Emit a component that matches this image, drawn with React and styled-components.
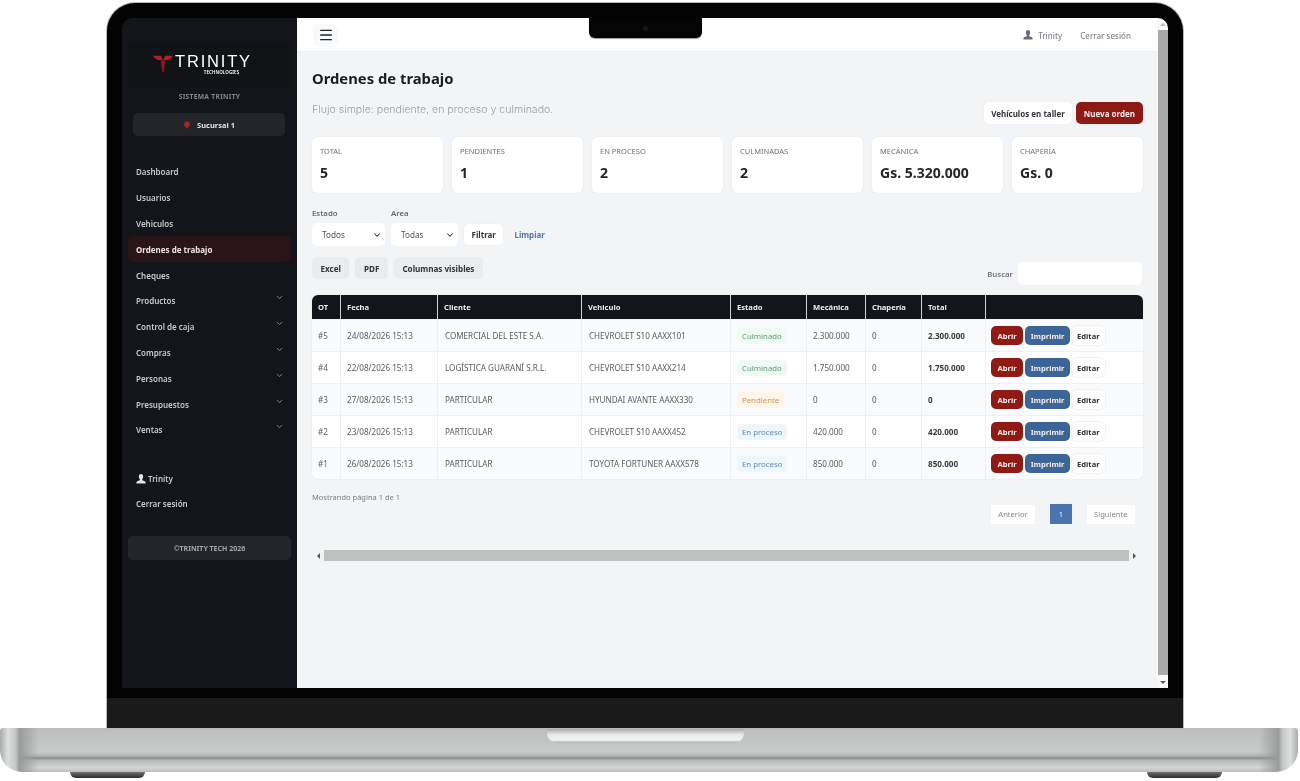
import React from "react";
import styled, { createGlobalStyle } from "styled-components";
import { Menu, ChevronDown, MapPin } from "lucide-react";

const GlobalStyle = createGlobalStyle`
  html, body {
    margin: 0;
    padding: 0;
    background: #fff;
    overflow: hidden;
  }
  * { box-sizing: border-box; }
  body { font-family: "Noto Sans", "Open Sans", sans-serif; }
`;

const Page = styled.div`
  width: 1300px;
  height: 781px;
  padding-top: 3px;
  display: flex;
  flex-direction: column;
`;

const Lid = styled.div`
  position: relative;
  width: 1076px;
  height: 725px;
  margin-left: 107px;
  background: #030303;
  border-radius: 28px 28px 0 0;
  box-shadow: 0 0 0 1px #b9b9b9;
  padding: 15px 15px 0 15px;
  display: flex;
  flex-direction: column;
`;

const Notch = styled.div`
  position: absolute;
  left: 482px;
  top: 15px;
  width: 113px;
  height: 20px;
  background: #050505;
  border-radius: 0 0 6px 6px;
  box-shadow: 0 1px 1px #999;
  display: flex;
  align-items: center;
  justify-content: center;
  &::after {
    content: "";
    width: 5px;
    height: 5px;
    border-radius: 50%;
    background: #17171a;
  }
`;

const Screen = styled.div`
  height: 670px;
  display: flex;
  overflow: hidden;
  border-radius: 10px 10px 0 0;
  filter: blur(0.5px);
`;

const Chin = styled.div`
  height: 30px;
  margin: 10px -15px 0 -15px;
  background: #1a1a1a;
`;

const Base = styled.div`
  height: 44px;
  border-radius: 3px 3px 22px 22px;
  width: 1298px;
  display: flex;
  justify-content: center;
  background:
    linear-gradient(90deg, #a9abab 0, #dedfdf 0.6%, #c4c5c5 1.2%, #9a9c9c 1.5%, transparent 3%, transparent 97%, #9a9c9c 98.5%, #c4c5c5 98.8%, #dedfdf 99.4%, #a9abab 100%),
    linear-gradient(180deg, #bcbebe 0, #c8caca 55%, #b0b2b2 64%, #8a8c8c 68%, #b8baba 74%, #d4d5d5 90%, #bbbdbd 100%);
`;

const BaseLip = styled.div`
  width: 197px;
  height: 15px;
  margin-right: 7px;
  border-radius: 0 0 10px 10px;
  background: linear-gradient(180deg, #9d9f9f 0, #e9e9e9 45%, #f3f3f3 80%, #a9abab 100%);
`;

const Feet = styled.div`
  display: flex;
  justify-content: space-between;
  width: 1152px;
  margin-left: 70px;
`;

const Foot = styled.div`
  width: 75px;
  height: 6px;
  border-radius: 0 0 14px 14px;
  background: linear-gradient(180deg, #6f7070 0, #2c2c2d 100%);
`;

const Sidebar = styled.aside`
  width: 175px;
  flex: none;
  background: #14151a;
  color: #d9dadc;
  padding: 0 6px;
  display: flex;
  flex-direction: column;
`;

const LogoBox = styled.div`
  height: 45px;
  margin-top: 25px;
  padding: 0 14px 3px 0;
  background: #121317;
  display: flex;
  align-items: center;
  justify-content: center;
  gap: 2px;
`;

const LogoWords = styled.div`
  display: flex;
  flex-direction: column;
  align-items: center;
  color: #fff;
`;

const LogoName = styled.div`
  font-family: "Liberation Sans", sans-serif;
  font-size: 16.5px;
  line-height: 14px;
  letter-spacing: 1.8px;
`;

const LogoSub = styled.div`
  font-size: 4.5px;
  line-height: 6px;
  font-weight: 600;
  letter-spacing: 0.1px;
  margin: 1px 0 0 16px;
`;

const SystemName = styled.div`
  margin-top: 3px;
  text-align: center;
  font-size: 6.7px;
  font-weight: 700;
  letter-spacing: 0.3px;
  color: #85868a;
  line-height: 12px;
`;

const BranchBox = styled.div`
  margin: 10px 6px 0 5px;
  height: 23px;
  border-radius: 5px;
  background: #24252a;
  display: flex;
  align-items: center;
  justify-content: center;
  gap: 6px;
  font-size: 7.5px;
  font-weight: 700;
  color: #e2e3e4;
  svg { color: #a12a2a; }
`;

const Nav = styled.nav`
  margin-top: 23px;
  display: flex;
  flex-direction: column;
`;

const NavItem = styled.div`
  height: 25.8px;
  padding: 0 8px;
  border-radius: 5px;
  display: flex;
  align-items: center;
  justify-content: space-between;
  font-size: 8px;
  font-weight: ${(p) => (p.$active ? 700 : 600)};
  color: ${(p) => (p.$active ? "#e9e4e4" : "#c9cacc")};
  background: ${(p) => (p.$active ? "#2a1419" : "transparent")};
  svg { color: #8c8d90; margin-right: -1px; margin-top: -6px; }
`;

const UserBlock = styled.div`
  margin-top: 23.5px;
  display: flex;
  flex-direction: column;
`;

const UserLink = styled.div`
  height: 24.5px;
  padding: 0 8px;
  display: flex;
  align-items: center;
  gap: 2px;
  font-size: 8px;
  font-weight: 600;
  color: #c9cacc;
  svg { color: #e4e4e4; }
`;

const Copyright = styled.div`
  margin-top: 21px;
  height: 24px;
  border-radius: 5px;
  background: #24252a;
  display: flex;
  align-items: center;
  justify-content: center;
  font-size: 7px;
  font-weight: 700;
  color: #a5a6a8;
`;

const Main = styled.main`
  flex: 1;
  min-width: 0;
  background: #f3f4f6;
  display: flex;
  flex-direction: column;
`;

const TopBar = styled.header`
  height: 34px;
  flex: none;
  background: #fff;
  display: flex;
  align-items: center;
  justify-content: space-between;
  padding: 1px 26px 0 17px;
  border-bottom: 1px solid #eff0f2;
`;

const MenuButton = styled.div`
  width: 24px;
  height: 23px;
  border-radius: 5px;
  background: #f8f9fa;
  display: flex;
  align-items: center;
  justify-content: center;
  color: #222;
`;

const TopLinks = styled.div`
  display: flex;
  align-items: center;
  gap: 18px;
  font-size: 8px;
  font-weight: 500;
  color: #85868f;
`;

const TopUser = styled.div`
  display: flex;
  align-items: center;
  gap: 5px;
  svg { color: #6c6a78; }
`;

const Content = styled.div`
  padding: 0 14px 0 15px;
  display: flex;
  flex-direction: column;
`;

const PageHead = styled.div`
  height: 72px;
  display: flex;
  align-items: flex-end;
  justify-content: space-between;
  padding-top: 16px;
`;

const Title = styled.h1`
  margin: 0 0 15px;
  font-size: 14.8px;
  line-height: 20px;
  font-weight: 700;
  color: #1c1d20;
`;

const Subtitle = styled.p`
  margin: 0;
  font-family: "Inter", sans-serif;
  font-size: 10.6px;
  font-weight: 300;
  line-height: 14px;
  color: #9b9ca1;
`;

const HeadTexts = styled.div`
  align-self: flex-start;
`;

const HeadActions = styled.div`
  display: flex;
  gap: 4px;
`;

const Button = styled.button`
  height: 22px;
  padding: 0 ${(p) => p.$pad || 8}px;
  border: 0;
  border-radius: 5px;
  font-family: inherit;
  font-size: 8px;
  font-weight: 700;
  white-space: nowrap;
  color: ${(p) => (p.$kind === "light" || p.$kind === "gray" ? "#33343a" : "#f4ecec")};
  background: ${(p) =>
    p.$kind === "red" ? "#8f1a14" : p.$kind === "blue" ? "#3c6496" : p.$kind === "gray" ? "#e9ebee" : "#fff"};
  box-shadow: ${(p) => (p.$kind === "light" ? "0 0 0 1px #f0f1f3" : "none")};
`;

const Cards = styled.div`
  margin-top: 13px;
  display: grid;
  grid-template-columns: repeat(6, 131px);
  column-gap: 9px;
`;

const Card = styled.div`
  height: 56px;
  background: #fff;
  border-radius: 6px;
  box-shadow: 0 0 2px rgba(30, 30, 40, 0.07);
  padding: 8px 8px 0;
`;

const CardLabel = styled.div`
  font-size: 7.5px;
  line-height: 12px;
  color: #6f7076;
`;

const CardValue = styled.div`
  margin-top: 6px;
  font-size: 14px;
  line-height: 20px;
  font-weight: 700;
  color: #24252a;
`;

const Filters = styled.div`
  margin-top: 15px;
  display: flex;
  align-items: flex-end;
  gap: 6px;
`;

const Field = styled.div`
  display: flex;
  flex-direction: column;
  gap: 4px;
`;

const FieldLabel = styled.div`
  font-size: 7.8px;
  line-height: 11px;
  font-weight: 600;
  color: #666870;
`;

const SelectBox = styled.div`
  width: ${(p) => p.$width}px;
  height: 23px;
  border-radius: 5px;
  background: #fff;
  padding: 0 3px 0 10px;
  display: flex;
  align-items: center;
  justify-content: space-between;
  font-size: 8.2px;
  color: #55565c;
  svg { color: #333; }
`;

const FilterButton = styled(Button)`
  height: 21px;
  padding: 0 7.5px;
  margin-bottom: 1px;
`;

const ClearLink = styled.a`
  font-size: 8px;
  font-weight: 700;
  color: #5577a8;
  margin: 0 0 5px 5px;
  line-height: 12px;
`;

const Tools = styled.div`
  margin-top: 11px;
  height: 28px;
  display: flex;
  align-items: flex-start;
  justify-content: space-between;
`;

const ToolButtons = styled.div`
  display: flex;
  gap: 6px;
`;

const ToolButton = styled(Button)`
  font-size: 8.1px;
  padding: 0 8.5px;
`;

const SearchGroup = styled.div`
  display: flex;
  align-items: center;
  gap: 5px;
  margin-top: 5px;
  margin-right: 1px;
  font-size: 7.8px;
  font-weight: 600;
  color: #74757b;
`;

const SearchInput = styled.div`
  width: 124px;
  height: 23px;
  background: #fff;
  border-radius: 5px;
`;

const Table = styled.table`
  margin-top: 10px;
  width: 831px;
  table-layout: fixed;
  border-collapse: separate;
  border-spacing: 0;
  font-size: 8.1px;
  border-radius: 6px;
  overflow: hidden;
  box-shadow: 0 0 2px rgba(30, 30, 40, 0.08);
`;

const HeadCell = styled.th`
  height: 24px;
  padding: 0 6px;
  background: #14151a;
  color: #eeeff0;
  font-size: 7.6px;
  font-weight: 700;
  text-align: left;
  border-right: 1px solid #d0d1d4;
  &:last-child { border-right: 0; }
`;

const Row = styled.tr`
  background: ${(p) => (p.$odd ? "#fafbfc" : "#fff")};
`;

const Cell = styled.td`
  height: 32px;
  padding: 0 ${(p) => p.$pad || 6}px;
  color: ${(p) => p.$color || "#5a5b61"};
  font-weight: ${(p) => (p.$bold ? 700 : 400)};
  border-right: 1px solid #eeeff1;
  border-top: 1px solid #eff0f2;
  white-space: nowrap;
  &:last-child { border-right: 0; }
`;

const Badge = styled.span`
  display: inline-block;
  padding: 0 5px;
  line-height: 16px;
  border-radius: 4px;
  font-size: 7.8px;
  color: ${(p) => p.$color};
  background: ${(p) => p.$bg};
`;

const RowActions = styled.div`
  display: flex;
  gap: 2px;
  align-items: center;
`;

const RowButton = styled(Button)`
  height: 19px;
  padding: 0 ${(p) => p.$pad || 6}px;
  font-size: 7.6px;
`;

const Footer = styled.div`
  display: flex;
  justify-content: space-between;
  align-items: flex-start;
`;

const Showing = styled.div`
  margin-top: 12px;
  font-size: 7.5px;
  line-height: 12px;
  color: #7b7c82;
`;

const Pager = styled.div`
  margin: 25px 8px 0 0;
  display: flex;
  align-items: center;
  gap: 15px;
`;

const PageLink = styled.div`
  height: ${(p) => (p.$active ? 20 : 19)}px;
  padding: 0 ${(p) => (p.$active ? 8.5 : 7.5)}px;
  display: flex;
  align-items: center;
  font-size: 7.6px;
  color: ${(p) => (p.$active ? "#e8eef6" : "#85868b")};
  background: ${(p) => (p.$active ? "#4a74ae" : "#fff")};
`;

const HScroll = styled.div`
  margin-top: 26px;
  height: 11px;
  display: flex;
  align-items: center;
  padding: 0 5px 0 3px;
  gap: 2px;
`;

const ScrollThumb = styled.div`
  flex: 1;
  height: 100%;
  background: #bfc0c0;
`;

const Arrow = styled.div`
  width: 0;
  height: 0;
  border-style: solid;
  margin: ${(p) => p.$margin || "0 2px"};
  border-color: transparent;
  border-width: ${(p) =>
    p.$dir === "left" || p.$dir === "right" ? "3px" : "3.5px"};
  ${(p) => p.$dir === "left" && "border-left-width: 0; border-right-color: #555;"}
  ${(p) => p.$dir === "right" && "border-right-width: 0; border-left-color: #555;"}
  ${(p) => p.$dir === "up" && "border-top-width: 0; border-bottom-color: #bbb;"}
  ${(p) => p.$dir === "down" && "border-bottom-width: 0; border-top-color: #555;"}
`;

const VScroll = styled.div`
  width: 11px;
  flex: none;
  background: #f8f8f8;
  display: flex;
  flex-direction: column;
  align-items: center;
  padding: 5px 0 4px 1px;
`;

const VThumb = styled.div`
  flex: 1;
  width: 100%;
  margin: 4px 0 6px;
  background: #a9a9a9;
`;

const PersonIcon = ({ size = 10 }) => (
  <svg width={size} height={size} viewBox="0 0 12 12" fill="currentColor">
    <ellipse cx="6" cy="3.2" rx="2.6" ry="3.2" />
    <path d="M4.700 6h2.600l.3 1.600 3 1.200c.5.2.9.9.9 1.600V11.500H.5v-1.100c0-.7.4-1.400.9-1.600l3-1.200z" />
  </svg>
);

const TrinityMark = () => (
  <svg width="20" height="20" viewBox="0 0 24 22">
    <path d="M0 1h9.500l2 4.500L9 6.500C5.500 6.500 2.500 4.500 0 1z" fill="#b3202a" />
    <path d="M24 1h-9.500l-2 4.500 2.500 1C18.500 6.500 21.500 4.500 24 1z" fill="#b3202a" />
    <path d="M9.500 7.500L12 6l2.500 1.500L13 19l-1 3-1-3z" fill="#8d1820" />
  </svg>
);

const navItems = [
  { name: "Dashboard" },
  { name: "Usuarios" },
  { name: "Vehiculos" },
  { name: "Ordenes de trabajo", active: true },
  { name: "Cheques" },
  { name: "Productos", sub: true },
  { name: "Control de caja", sub: true },
  { name: "Compras", sub: true },
  { name: "Personas", sub: true },
  { name: "Presupuestos", sub: true },
  { name: "Ventas", sub: true },
];

const stats = [
  { label: "TOTAL", value: "5" },
  { label: "PENDIENTES", value: "1" },
  { label: "EN PROCESO", value: "2" },
  { label: "CULMINADAS", value: "2" },
  { label: "MECÁNICA", value: "Gs. 5.320.000" },
  { label: "CHAPERÍA", value: "Gs. 0" },
];

const columns = [
  { name: "OT", width: 29 },
  { name: "Fecha", width: 97 },
  { name: "Cliente", width: 144 },
  { name: "Vehiculo", width: 149 },
  { name: "Estado", width: 76 },
  { name: "Mecánica", width: 59 },
  { name: "Chapería", width: 56 },
  { name: "Total", width: 64 },
  { name: "", width: 157 },
];

const statusStyles = {
  Culminado: { color: "#5f9a7c", bg: "#eefaf3" },
  Pendiente: { color: "#c8975a", bg: "#fff6e8" },
  "En proceso": { color: "#5f88b4", bg: "#eef6fc" },
};

const orders = [
  { id: "#5", date: "24/08/2026 15:13", client: "COMERCIAL DEL ESTE S.A.", vehicle: "CHEVROLET S10 AAXX101", status: "Culminado", mech: "2.300.000", total: "2.300.000" },
  { id: "#4", date: "22/08/2026 15:13", client: "LOGÍSTICA GUARANÍ S.R.L.", vehicle: "CHEVROLET S10 AAXX214", status: "Culminado", mech: "1.750.000", total: "1.750.000" },
  { id: "#3", date: "27/08/2026 15:13", client: "PARTICULAR", vehicle: "HYUNDAI AVANTE AAXX330", status: "Pendiente", mech: "0", total: "0" },
  { id: "#2", date: "23/08/2026 15:13", client: "PARTICULAR", vehicle: "CHEVROLET S10 AAXX452", status: "En proceso", mech: "420.000", total: "420.000" },
  { id: "#1", date: "26/08/2026 15:13", client: "PARTICULAR", vehicle: "TOYOTA FORTUNER AAXX578", status: "En proceso", mech: "850.000", total: "850.000" },
];

const App = () => {
  return (
    <Page>
      <GlobalStyle />
      <Lid>
        <Screen>
          <Sidebar>
            <LogoBox>
              <TrinityMark />
              <LogoWords>
                <LogoName>TRINITY</LogoName>
                <LogoSub>TECHNOLOGIES</LogoSub>
              </LogoWords>
            </LogoBox>
            <SystemName>SISTEMA TRINITY</SystemName>
            <BranchBox>
              <MapPin size={8} fill="#a12a2a" />
              Sucursal 1
            </BranchBox>
            <Nav>
              {navItems.map((item) => (
                <NavItem key={item.name} $active={item.active}>
                  {item.name}
                  {item.sub && <ChevronDown size={9} strokeWidth={2.5} />}
                </NavItem>
              ))}
            </Nav>
            <UserBlock>
              <UserLink>
                <PersonIcon size={10} />
                Trinity
              </UserLink>
              <UserLink>Cerrar sesión</UserLink>
            </UserBlock>
            <Copyright>©TRINITY TECH 2026</Copyright>
          </Sidebar>
          <Main>
            <TopBar>
              <MenuButton>
                <Menu size={16} strokeWidth={2} />
              </MenuButton>
              <TopLinks>
                <TopUser>
                  <PersonIcon size={10} />
                  Trinity
                </TopUser>
                Cerrar sesión
              </TopLinks>
            </TopBar>
            <Content>
              <PageHead>
                <HeadTexts>
                  <Title>Ordenes de trabajo</Title>
                  <Subtitle>Flujo simple: pendiente, en proceso y culminado.</Subtitle>
                </HeadTexts>
                <HeadActions>
                  <Button $kind="light" $pad={7}>Vehículos en taller</Button>
                  <Button $kind="red">Nueva orden</Button>
                </HeadActions>
              </PageHead>
              <Cards>
                {stats.map((s) => (
                  <Card key={s.label}>
                    <CardLabel>{s.label}</CardLabel>
                    <CardValue>{s.value}</CardValue>
                  </Card>
                ))}
              </Cards>
              <Filters>
                <Field>
                  <FieldLabel>Estado</FieldLabel>
                  <SelectBox $width={73}>
                    Todos
                    <ChevronDown size={10} strokeWidth={2.5} />
                  </SelectBox>
                </Field>
                <Field>
                  <FieldLabel>Area</FieldLabel>
                  <SelectBox $width={67}>
                    Todas
                    <ChevronDown size={10} strokeWidth={2.5} />
                  </SelectBox>
                </Field>
                <FilterButton $kind="light">Filtrar</FilterButton>
                <ClearLink>Limpiar</ClearLink>
              </Filters>
              <Tools>
                <ToolButtons>
                  <ToolButton $kind="gray">Excel</ToolButton>
                  <ToolButton $kind="gray">PDF</ToolButton>
                  <ToolButton $kind="gray">Columnas visibles</ToolButton>
                </ToolButtons>
                <SearchGroup>
                  Buscar
                  <SearchInput />
                </SearchGroup>
              </Tools>
              <Table>
                <colgroup>
                  {columns.map((c) => (
                    <col key={c.name} width={c.width} />
                  ))}
                </colgroup>
                <thead>
                  <tr>
                    {columns.map((c) => (
                      <HeadCell key={c.name}>{c.name}</HeadCell>
                    ))}
                  </tr>
                </thead>
                <tbody>
                  {orders.map((o, i) => (
                    <Row key={o.id} $odd={i % 2 === 0}>
                      <Cell>{o.id}</Cell>
                      <Cell>{o.date}</Cell>
                      <Cell $pad={7}>{o.client}</Cell>
                      <Cell $pad={7}>{o.vehicle}</Cell>
                      <Cell>
                        <Badge $color={statusStyles[o.status].color} $bg={statusStyles[o.status].bg}>
                          {o.status}
                        </Badge>
                      </Cell>
                      <Cell>{o.mech}</Cell>
                      <Cell>0</Cell>
                      <Cell $bold $color="#3a3b40">{o.total}</Cell>
                      <Cell $pad={5}>
                        <RowActions>
                          <RowButton $kind="red" $pad={6.5}>Abrir</RowButton>
                          <RowButton $kind="blue" $pad={5.5}>Imprimir</RowButton>
                          <RowButton $kind="light" $pad={5}>Editar</RowButton>
                        </RowActions>
                      </Cell>
                    </Row>
                  ))}
                </tbody>
              </Table>
              <Footer>
                <Showing>Mostrando página 1 de 1</Showing>
                <Pager>
                  <PageLink>Anterior</PageLink>
                  <PageLink $active>1</PageLink>
                  <PageLink>Siguiente</PageLink>
                </Pager>
              </Footer>
              <HScroll>
                <Arrow $dir="left" />
                <ScrollThumb />
                <Arrow $dir="right" />
              </HScroll>
            </Content>
          </Main>
          <VScroll>
            <Arrow $dir="up" $margin="0" />
            <VThumb />
            <Arrow $dir="down" $margin="0" />
          </VScroll>
        </Screen>
        <Notch />
        <Chin />
      </Lid>
      <Base>
        <BaseLip />
      </Base>
      <Feet>
        <Foot />
        <Foot />
      </Feet>
    </Page>
  );
};

export default App;
